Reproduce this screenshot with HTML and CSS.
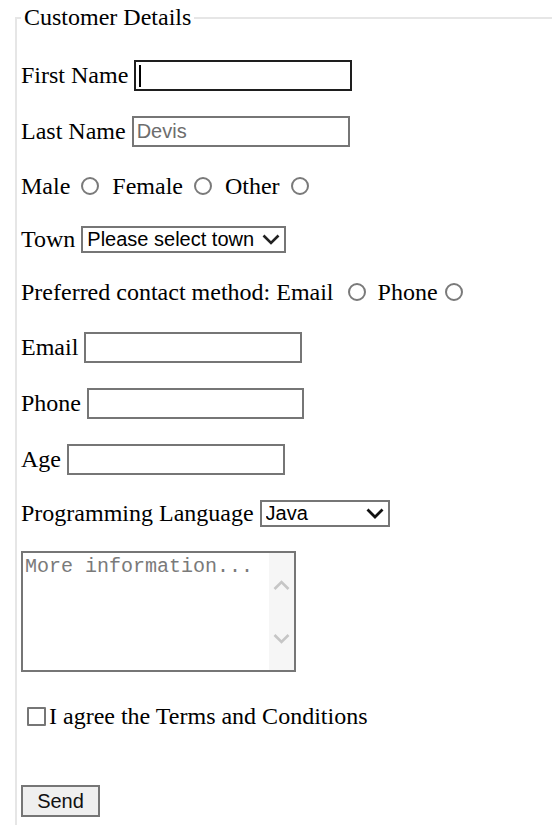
FILE: index.html
```html
<!DOCTYPE html>
<html lang="en">
<head>
<meta charset="utf-8">
<title>Customer Details</title>
<link rel="stylesheet" href="styles.css">
</head>
<body>
<form class="form">
  <fieldset class="details">
    <legend class="details-title">Customer Details</legend>

    <div class="row row-input">
      <label for="first-name">First Name</label>
      <span class="field-wrap">
        <input id="first-name" class="text-input is-focused" type="text">
        <span class="caret"></span>
      </span>
    </div>

    <div class="row row-input">
      <label for="last-name">Last Name</label>
      <input id="last-name" class="text-input" type="text" placeholder="Devis">
    </div>

    <div class="row row-text">
      <span>Male</span>
      <input class="radio radio-sex" type="radio" name="sex" value="male">
      <span>Female</span>
      <input class="radio radio-sex" type="radio" name="sex" value="female">
      <span>Other</span>
      <input class="radio radio-sex" type="radio" name="sex" value="other">
    </div>

    <div class="row row-select">
      <label for="town">Town</label>
      <span class="select-wrap">
        <select id="town" class="select select-town">
          <option>Please select town</option>
        </select>
        <svg class="chevron" width="18" height="11" viewBox="0 0 18 11"><path d="M1.5 1.5 L9 9 L16.5 1.5" fill="none" stroke="#222" stroke-width="2.6"/></svg>
      </span>
    </div>

    <div class="row row-text">
      <span>Preferred contact method: Email</span>
      <input class="radio radio-email" type="radio" name="contact" value="email">
      <span>Phone</span>
      <input class="radio radio-phone" type="radio" name="contact" value="phone">
    </div>

    <div class="row row-input">
      <label for="email">Email</label>
      <input id="email" class="text-input" type="email">
    </div>

    <div class="row row-input">
      <label for="phone">Phone</label>
      <input id="phone" class="text-input text-input-phone" type="tel">
    </div>

    <div class="row row-input">
      <label for="age">Age</label>
      <input id="age" class="text-input" type="number">
    </div>

    <div class="row row-select">
      <label for="lang">Programming Language</label>
      <span class="select-wrap">
        <select id="lang" class="select select-lang">
          <option>Java</option>
        </select>
        <svg class="chevron" width="18" height="11" viewBox="0 0 18 11"><path d="M1.5 1.5 L9 9 L16.5 1.5" fill="none" stroke="#111" stroke-width="2.8"/></svg>
      </span>
    </div>

    <div class="textarea-wrap">
      <textarea class="notes" placeholder="More information..."></textarea>
      <div class="scrollbar">
        <svg class="scroll-up" width="17" height="11" viewBox="0 0 17 11"><path d="M1.5 9 L8.5 2 L15.5 9" fill="none" stroke="#c6c6c6" stroke-width="2.6"/></svg>
        <svg class="scroll-down" width="17" height="11" viewBox="0 0 17 11"><path d="M1.5 2 L8.5 9 L15.5 2" fill="none" stroke="#c6c6c6" stroke-width="2.6"/></svg>
      </div>
    </div>

    <div class="row row-text row-terms">
      <input id="terms" class="checkbox" type="checkbox">
      <label for="terms">I agree the Terms and Conditions</label>
    </div>

    <div class="actions">
      <button class="send" type="button">Send</button>
    </div>
  </fieldset>
</form>
</body>
</html>
```

FILE: styles.css
```css
* {
  box-sizing: border-box;
}

html, body {
  margin: 0;
  padding: 0;
  background: #fff;
}

body {
  font-family: "Liberation Serif", "Times New Roman", serif;
  font-size: 24px;
  color: #000;
}

.form {
  margin: 0;
}

.details {
  margin: 4px 0 0 15px;
  padding: 28px 0 8px 4px;
  border: 2px solid #e6e6e6;
  border-right: none;
  border-bottom: none;
  min-width: 0;
  display: flex;
  flex-direction: column;
  gap: 24px;
}

.details-title {
  padding: 0 3px;
  line-height: 27px;
  font-size: 24px;
}

.row {
  display: flex;
  align-items: center;
  white-space: nowrap;
  line-height: 27px;
}

.row-input {
  height: 32px;
  gap: 6px;
}

.row-text {
  height: 30px;
}

.row-select {
  height: 28px;
  gap: 6px;
}

.field-wrap {
  position: relative;
  display: inline-block;
}

.text-input {
  width: 218px;
  height: 31px;
  margin: 0;
  padding: 0 3px;
  border: 2px solid #767676;
  border-radius: 0;
  background: #fff;
  font-family: "Liberation Sans", Arial, sans-serif;
  font-size: 20px;
  color: #000;
  outline: none;
  display: block;
}

.text-input::placeholder {
  color: #6d6d6d;
}

.text-input.is-focused {
  border-color: #1e1e1e;
}

.text-input-phone {
  width: 217px;
}

.caret {
  position: absolute;
  left: 5px;
  top: 5px;
  width: 2px;
  height: 22px;
  background: #000;
}

.radio {
  -webkit-appearance: none;
  appearance: none;
  width: 18px;
  height: 18px;
  margin: 0;
  border: 2px solid #7a7a7a;
  border-radius: 50%;
  background: #fff;
  flex: none;
}

.radio-sex {
  margin: 0 13px 0 11px;
}

.radio-email {
  margin: 0 12px 0 14px;
}

.radio-phone {
  margin: 0 0 0 7px;
}

.select-wrap {
  position: relative;
  display: inline-block;
}

.select {
  -webkit-appearance: none;
  appearance: none;
  height: 27px;
  margin: 0;
  padding: 0 0 0 4px;
  border: 2px solid #767676;
  border-radius: 0;
  background: #fff;
  font-family: "Liberation Sans", Arial, sans-serif;
  font-size: 20px;
  color: #000;
  display: block;
}

.select-town {
  width: 205px;
}

.select-lang {
  width: 130px;
}

.chevron {
  position: absolute;
  right: 6px;
  top: 8px;
  pointer-events: none;
}

.textarea-wrap {
  position: relative;
  width: 275px;
  height: 121px;
}

.notes {
  display: block;
  width: 275px;
  height: 121px;
  margin: 0;
  padding: 2px 28px 2px 2px;
  border: 2px solid #767676;
  border-radius: 0;
  resize: none;
  overflow: hidden;
  font-family: "Liberation Mono", "Courier New", monospace;
  font-size: 20px;
  color: #000;
}

.notes::placeholder {
  color: #7a7a7a;
}

.scrollbar {
  position: absolute;
  top: 2px;
  right: 2px;
  bottom: 2px;
  width: 25px;
  background: #f6f6f6;
}

.scroll-up {
  position: absolute;
  left: 4px;
  top: 27px;
}

.scroll-down {
  position: absolute;
  left: 4px;
  bottom: 26px;
}

.row-terms {
  margin-top: 5px;
  padding-left: 6px;
}

.checkbox {
  -webkit-appearance: none;
  appearance: none;
  width: 19px;
  height: 19px;
  margin: 0 3px 0 0;
  border: 2px solid #767676;
  border-radius: 1px;
  background: #fff;
  flex: none;
}

.actions {
  margin-top: 30px;
}

.send {
  width: 79px;
  height: 32px;
  margin: 0;
  padding: 0;
  border: 2px solid #767676;
  border-radius: 0;
  background: #efefef;
  font-family: "Liberation Sans", Arial, sans-serif;
  font-size: 20px;
  color: #111;
}
```
